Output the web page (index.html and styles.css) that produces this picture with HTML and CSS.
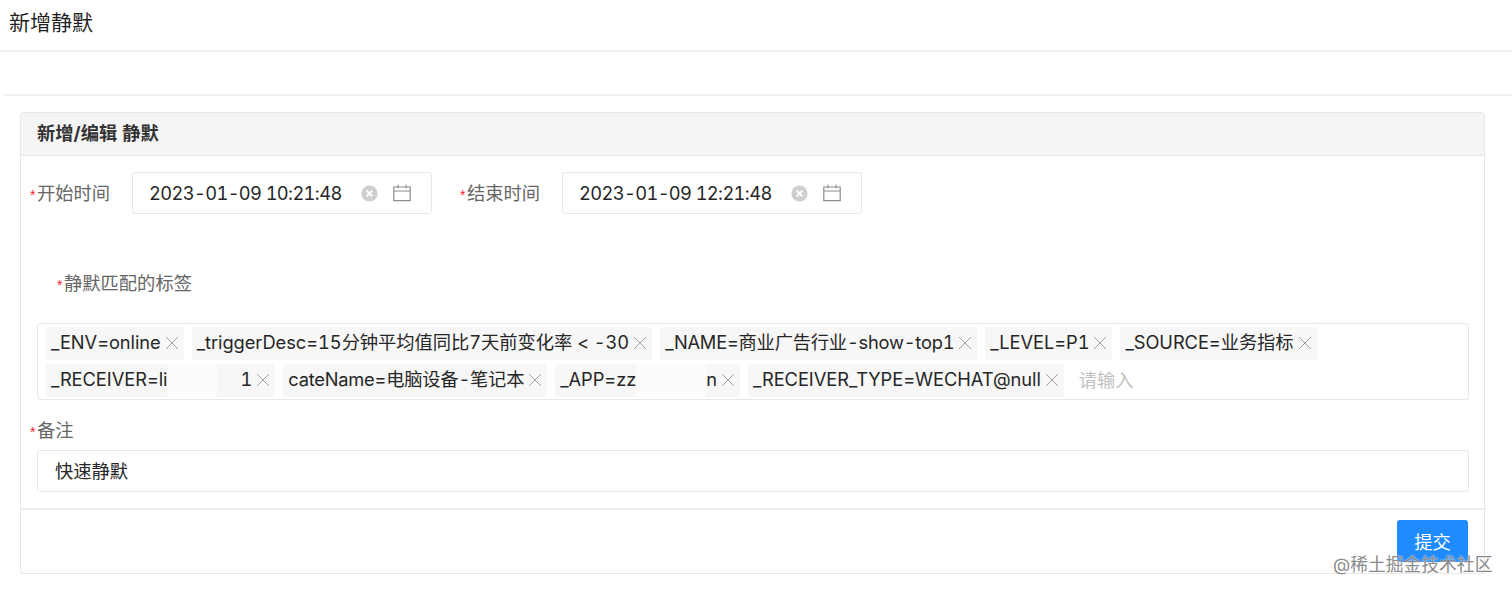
FILE: index.html
```html
<!DOCTYPE html>
<html lang="zh">
<head>
<meta charset="utf-8">
<title>新增静默</title>
<link rel="stylesheet" href="styles.css">
</head>
<body>
<header class="page-head">新增静默</header>
<div class="tabs-bar"></div>
<section class="card">
  <div class="card-head">新增/编辑 静默</div>
  <div class="card-body">
    <div class="time-row">
      <label class="label time-label"><i class="star">*</i>开始时间</label>
      <div class="date-input">
        <span class="date-text">2023-01-09 10:21:48</span>
        <svg class="clear" viewBox="0 0 18 18"><circle cx="9" cy="9" r="8.5" fill="#cfcfcf"/><path d="M6 6l6 6M12 6l-6 6" stroke="#fff" stroke-width="2"/></svg>
        <svg class="cal" viewBox="0 0 18 18" fill="none" stroke="#8c8c8c" stroke-width="1.2"><path d="M.8 3h16.4v13.6H.8zM.8 7h16.4M5 .8v3.4M13 .8v3.4"/></svg>
      </div>
      <label class="label time-label second"><i class="star">*</i>结束时间</label>
      <div class="date-input">
        <span class="date-text">2023-01-09 12:21:48</span>
        <svg class="clear" viewBox="0 0 18 18"><circle cx="9" cy="9" r="8.5" fill="#cfcfcf"/><path d="M6 6l6 6M12 6l-6 6" stroke="#fff" stroke-width="2"/></svg>
        <svg class="cal" viewBox="0 0 18 18" fill="none" stroke="#8c8c8c" stroke-width="1.2"><path d="M.8 3h16.4v13.6H.8zM.8 7h16.4M5 .8v3.4M13 .8v3.4"/></svg>
      </div>
    </div>
    <label class="label tags-label"><i class="star">*</i>静默匹配的标签</label>
    <div class="tags-box">
      <span class="tag">_ENV=online<b class="x"></b></span>
      <span class="tag">_triggerDesc=15分钟平均值同比7天前变化率 &lt; -30<b class="x"></b></span>
      <span class="tag tag-tight">_NAME=商业广告行业-show-top1<b class="x"></b></span>
      <span class="tag">_LEVEL=P1<b class="x"></b></span>
      <span class="tag">_SOURCE=业务指标<b class="x"></b></span>
      <span class="tag">_RECEIVER=li<span class="mask mask-a"></span>1<b class="x"></b></span>
      <span class="tag tag-tight">cateName=电脑设备-笔记本<b class="x"></b></span>
      <span class="tag">_APP=zz<span class="mask mask-b"></span>n<b class="x"></b></span>
      <span class="tag">_RECEIVER_TYPE=WECHAT@null<b class="x"></b></span>
      <span class="placeholder">请输入</span>
    </div>
    <label class="label note-label"><i class="star">*</i>备注</label>
    <div class="note-input">快速静默</div>
  </div>
  <div class="card-foot"><button class="submit" type="button">提交</button></div>
</section>
<div class="watermark">@稀土掘金技术社区</div>
</body>
</html>
```
FILE: styles.css
```css
* { box-sizing: border-box; }
html, body { margin: 0; height: 593px; overflow: hidden; }
body {
  position: relative;
  background: #fff;
  color: #262626;
  font-family: Inter, "Noto Sans CJK SC", sans-serif;
  font-size: 18.3px;
  font-variant-numeric: tabular-nums;
}
.page-head {
  height: 52px;
  padding: 8px 0 0 9px;
  font-size: 21px;
  line-height: 30px;
  color: #1f1f1f;
  border-bottom: 2px solid #efefef;
}
.tabs-bar {
  height: 44px;
  margin-left: 4px;
  border-bottom: 2px solid #f0f0f0;
}
.card {
  width: 1465px;
  height: 462px;
  margin: 16px 0 0 20px;
  border: 1px solid #e8e8e8;
  border-radius: 3px;
  display: flex;
  flex-direction: column;
}
.card-head {
  height: 43px;
  padding-left: 16px;
  background: #f5f5f5;
  border-bottom: 1px solid #e8e8e8;
  font-weight: 700;
  line-height: 40px;
  color: #333;
}
.card-body {
  height: 354px;
  padding: 16px 16px 0 9px;
  border-bottom: 2px solid #ececec;
}
.label { color: #666; line-height: 24px; display: block; }
.star {
  color: #f5222d;
  font: normal 14px "Liberation Sans", sans-serif;
  display: inline-block;
  width: 7px;
}
.time-row { display: flex; align-items: center; height: 42px; }
.time-label { width: 102px; }
.time-label.second { width: 102px; margin-left: 28px; }
.date-input {
  width: 300px;
  height: 42px;
  padding: 0 20px 0 16px;
  border: 1px solid #e8e8e8;
  border-radius: 3px;
  display: flex;
  align-items: center;
}
.date-text { color: #262626; white-space: nowrap; flex: 1; letter-spacing: -0.62px; }
.clear { width: 17px; height: 17px; margin-right: 15px; }
.cal { width: 18px; height: 18px; }
.tags-label { margin: 57px 0 0 27px; }
.tags-box {
  width: 1432px;
  height: 77px;
  margin: 28px 0 0 7px;
  padding: 3px 8px;
  border: 1px solid #e8e8e8;
  border-radius: 3px;
  display: flex;
  flex-wrap: wrap;
  align-content: flex-start;
  gap: 4px 8px;
}
.tag {
  height: 33px;
  padding: 0 6px 2px 5px;
  background: #f7f7f7;
  border-radius: 2px;
  line-height: 31px;
  letter-spacing: -0.05px;
  white-space: nowrap;
  display: inline-flex;
  align-items: center;
}
.tag-tight { letter-spacing: -0.22px; }
.x {
  width: 12px;
  height: 12px;
  margin-left: 5px;
  background:
    linear-gradient(45deg, transparent 46%, #a0a0a0 46%, #a0a0a0 54%, transparent 54%),
    linear-gradient(-45deg, transparent 46%, #a0a0a0 46%, #a0a0a0 54%, transparent 54%);
}
.mask { display: inline-block; height: 33px; margin-bottom: -2px; }
.mask-a { width: 73px; background: linear-gradient(to right, #fcfcfc 68%, transparent 68%); }
.mask-b { width: 70px; background: #fcfcfc; }
.placeholder { color: #bfbfbf; line-height: 32px; margin-left: 7px; }
.note-label { margin: 18px 0 0 0; }
.note-input {
  width: 1432px;
  height: 42px;
  margin: 8px 0 0 7px;
  padding-left: 17px;
  border: 1px solid #e8e8e8;
  border-radius: 3px;
  line-height: 40px;
}
.card-foot { flex: 1; display: flex; justify-content: flex-end; padding: 10px 16px 0 0; }
.submit {
  width: 71px;
  height: 42px;
  border: 0;
  border-radius: 3px;
  background: #1f8bff;
  color: #fff;
  font: inherit;
}
.watermark {
  position: absolute;
  left: 1333px;
  top: 553px;
  font-size: 17.8px;
  line-height: 24px;
  color: #8a8a8a;
  white-space: nowrap;
  text-shadow: 0 0 2px #fff;
}
```
